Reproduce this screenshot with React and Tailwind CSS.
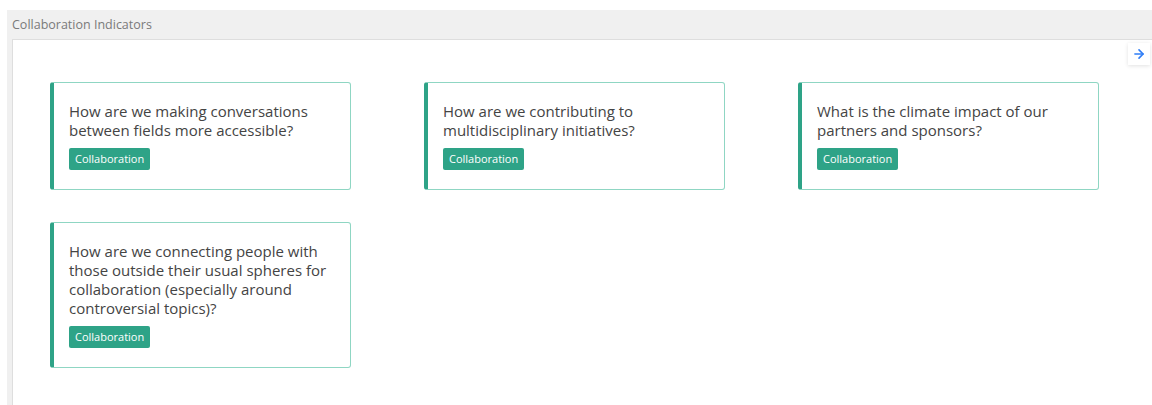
import { ArrowRight } from "lucide-react";

const questions = [
  "How are we making conversations between fields more accessible?",
  "How are we contributing to multidisciplinary initiatives?",
  "What is the climate impact of our partners and sponsors?",
  "How are we connecting people with those outside their usual spheres for collaboration (especially around controversial topics)?",
];

function IndicatorCard({ text }) {
  return (
    <div className="w-[301px] rounded-[3px] border border-[#8fd6c3] border-l-4 border-l-[#2ea387] bg-white pl-[15px] pr-4 pt-[19px] pb-[19px]">
      <p className="text-[15px] leading-[19px] text-[#444]">{text}</p>
      <span className="mt-2 inline-block rounded-[2px] bg-[#2ea387] px-[6px] text-[11px] leading-[22px] text-white">
        Collaboration
      </span>
    </div>
  );
}

export default function App() {
  return (
    <div className="min-h-[405px] bg-white pt-[10px] pl-[7px] font-['Open_Sans',sans-serif]">
      <div className="flex min-h-[395px] flex-col bg-[#f0f0f0]">
        {/* panel header */}
        <div className="h-[29px] pl-[5px] pt-[7px] text-[12.5px] leading-[16px] text-[#7a7a7a]">
          Collaboration Indicators
        </div>
        <div className="relative ml-[5px] flex-1 border-t border-l border-[#dedede] bg-white pl-[37px] pt-[42px] pb-8">
          <button className="absolute top-[3px] right-[2px] flex h-[22px] w-[22px] items-center justify-center bg-white shadow-[0_1px_4px_rgba(0,0,0,0.12)]">
            <ArrowRight className="h-[14px] w-[14px] text-[#2f7df6]" strokeWidth={2.8} />
          </button>
          <div className="grid grid-cols-[301px_301px_301px] gap-x-[73px] gap-y-[32px] items-start">
            {questions.map((q) => (
              <IndicatorCard key={q} text={q} />
            ))}
          </div>
        </div>
      </div>
    </div>
  );
}
